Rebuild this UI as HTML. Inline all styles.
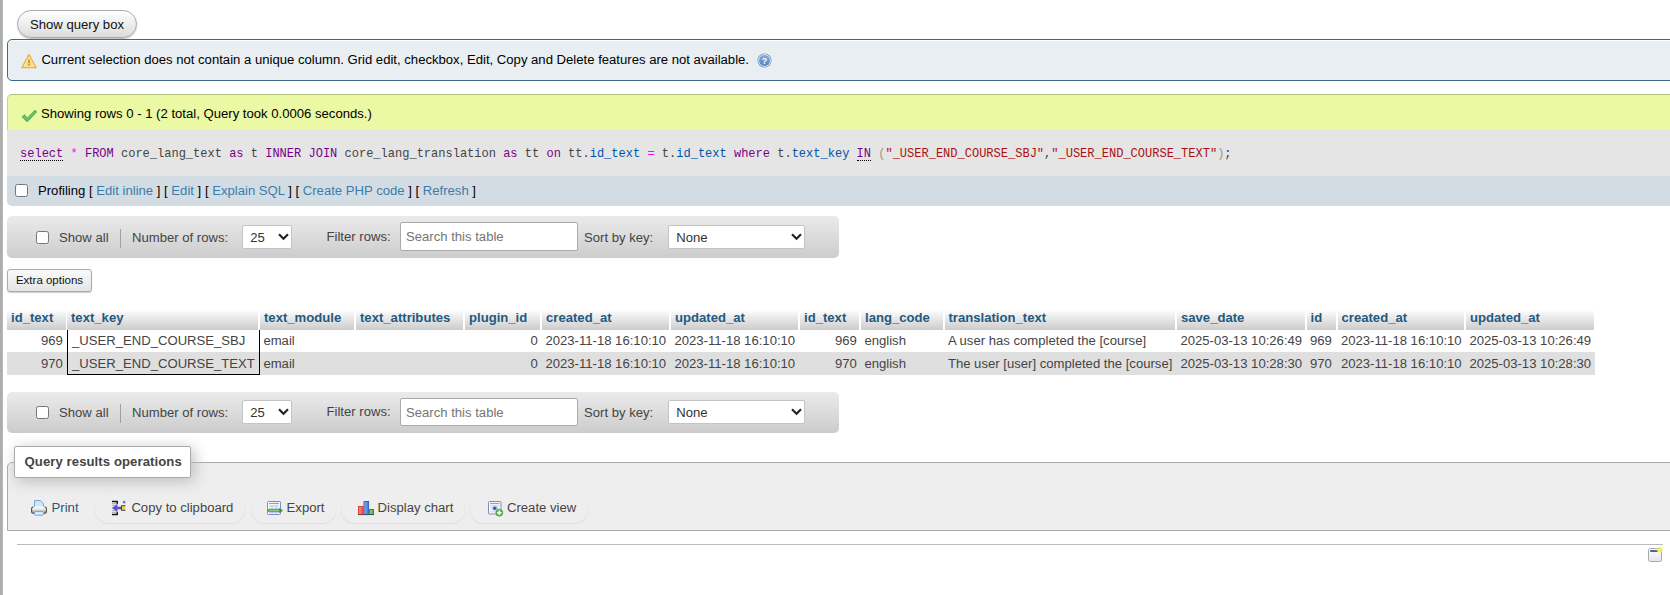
<!DOCTYPE html>
<html>
<head>
<meta charset="utf-8">
<title>phpMyAdmin</title>
<style>
html,body{margin:0;padding:0;}
body{width:1670px;height:595px;overflow:hidden;background:#fff;position:relative;
 font-family:"Liberation Sans",Arial,sans-serif;font-size:13.12px;color:#444;line-height:normal;}
*{box-sizing:border-box;}
.abs{position:absolute;}
#leftbar{left:0;top:0;width:3px;height:595px;background:#adadad;}
#leftbar2{left:2px;top:0;width:1px;height:595px;background:#b6b6b6;}
#showq{left:17px;top:10px;width:120px;height:28px;border:1px solid #aaa;border-radius:14px;
 background:linear-gradient(#ffffff,#dcdcdc);color:#111;font-size:13.12px;text-align:center;line-height:27px;
 box-shadow:0 1px 1px rgba(0,0,0,.25);}
#notice{left:7px;top:39px;width:1700px;height:42px;border:1px solid #3a6c7e;border-radius:5px;background:#e8eef1;
 box-shadow:inset 0 1px 1px #fff;color:#000;font-size:13.12px;}
#notice .t{left:33.4px;top:12px;white-space:nowrap;}
#success{left:7px;top:94px;width:1700px;height:36px;background:#ebf8a4;border-top:1px solid #adc27c;border-left:1px solid #c4d88a;
 border-radius:5px 5px 0 0;color:#000;}
#success .t{left:33px;top:11.4px;white-space:nowrap;}
#code{left:7px;top:130px;width:1700px;height:46px;background:#e5e5e5;}
#code .t{left:13px;top:17px;white-space:pre;font-family:"Liberation Mono",monospace;font-size:12.034px;color:#444;}
.kw{color:#708;} .op{color:#f0f;} .pr{color:#05a;} .st{color:#a11;} .br{color:#997;}
.dot{position:relative;}
.dot::after{content:"";position:absolute;left:0;right:0;top:13px;border-bottom:1px dotted #000;}
#tools{left:7px;top:176px;width:1700px;height:30px;background:#d3dce3;border-radius:0 0 5px 5px;color:#000;}
#tools .t{left:31px;top:7px;white-space:nowrap;font-size:13.12px;}
a,.a{color:#235a81;text-decoration:none;}
#tools .a{color:#3b7cab;}
.cb{position:absolute;width:13px;height:13px;border:1px solid #767676;border-radius:2.5px;background:#fff;}
.nav{left:7px;width:832px;height:41px;border-radius:5px;background:linear-gradient(#ebebeb,#cccccc);color:#444;font-size:13.12px;}
.nav span{position:absolute;white-space:nowrap;top:13px;}
.nav.n1 > *{margin-top:1px;}
.nav.n1 > .inp{margin-top:0;height:29px;}
.nav .sep{position:absolute;left:113px;top:12px;width:1px;height:19px;background:#a0a0a0;}
.sel{position:absolute;height:24px;border:1px solid #c4c4c4;border-radius:2px;background:#fff;color:#333;font-size:13.12px;}
.sel b{position:absolute;font-weight:normal;left:7.3px;top:3.5px;}
.sel svg{position:absolute;right:2.5px;top:7px;}
.inp{position:absolute;left:393px;top:6px;width:178px;height:28px;border:1px solid #aaa;border-radius:2px;background:#fff;color:#757575;font-size:13.12px;}
.inp b{position:absolute;font-weight:normal;left:5px;top:6px;}
#extra{left:7px;top:269px;width:85px;height:23px;border:1px solid #aaa;border-radius:3px;background:linear-gradient(#fafafa,#e4e4e4);
 color:#111;font-size:11.5px;text-align:center;line-height:21px;box-shadow:0 1px 1px rgba(0,0,0,.2);}
table#res{position:absolute;left:7px;top:309px;border-collapse:separate;border-spacing:0;table-layout:fixed;font-size:13.12px;color:#444;}
#res th{height:21px;line-height:15px;padding:0 0 4px 4px;text-align:left;font-weight:bold;color:#235a81;background:linear-gradient(#ffffff,#cccccc);
 border-right:2px solid #fff;white-space:nowrap;overflow:hidden;font-size:13.12px;}
#res td{height:22px;line-height:15px;padding:0 0 1px 3.4px;white-space:nowrap;overflow:hidden;border-right:2px solid transparent;}
#res th:last-child{border-right:1px solid #fff;}
#res th:first-child{border-right:1px solid #fff;}
#res td.r{text-align:right;padding:0 2.2px 1px 0;}
#res tr.e td{height:23px;padding-bottom:0;}
#res tr.e td{background:#dfdfdf;}
#res tr.o td{background:#fff;}
#res td.m{border-left:1px solid #000;border-right:1px solid #000;padding-left:4px;}
#res tr.e td.m{border-bottom:1px solid #000;}
#fs{left:7px;top:462px;width:1700px;height:69px;border:1px solid #aaa;border-radius:5px 0 0 0;background:#eee;}
#legend{left:14px;top:446px;width:177px;height:32px;border:1px solid #aaa;border-radius:2px;background:#fff;
 box-shadow:3px 3px 15px #bbb;font-weight:bold;color:#444;font-size:13.12px;line-height:30px;padding-left:9.5px;letter-spacing:.09px;}
.op1{position:absolute;top:495px;height:28px;border-radius:14px;white-space:nowrap;font-size:13.12px;line-height:25px;color:#444;
 box-shadow:0 1px 2px rgba(0,0,0,.07), 0 0 1px rgba(0,0,0,.03);}
.op1 svg{position:absolute;top:6px;}
.op1 span{position:absolute;top:0;}
#hr{left:17px;top:544px;width:1646px;height:1px;background:#bbb;}
</style>
</head>
<body>
<div id="leftbar" class="abs"></div><div id="leftbar2" class="abs"></div>

<div id="showq" class="abs">Show query box</div>

<div id="notice" class="abs">
 <svg class="abs" style="left:13px;top:13px" width="16" height="16" viewBox="0 0 16 16"><path d="M8 1.5 L15 14.5 L1 14.5 Z" fill="#f9dc7c" stroke="#e6b040" stroke-width="1.3" stroke-linejoin="round"/><path d="M8 4.2 L13 13.4 L3 13.4 Z" fill="none" stroke="#fdf0b8" stroke-width=".8"/><rect x="7.2" y="6.4" width="1.7" height="4" fill="#c98d2a"/><rect x="7.2" y="11.1" width="1.7" height="1.6" fill="#c98d2a"/></svg>
 <div class="abs t">Current selection does not contain a unique column. Grid edit, checkbox, Edit, Copy and Delete features are not available.</div>
 <svg class="abs" style="left:749.4px;top:13px" width="15" height="15" viewBox="0 0 15 15"><defs><linearGradient id="gh" x1="0" y1="0" x2="0" y2="1"><stop offset="0" stop-color="#86acdb"/><stop offset="1" stop-color="#5482bd"/></linearGradient></defs><circle cx="7.5" cy="7.5" r="7" fill="#6593cb"/><circle cx="7.5" cy="7.5" r="5.9" fill="url(#gh)" stroke="#e6eef9" stroke-width=".9"/><text x="7.5" y="10.7" font-family="Liberation Sans, sans-serif" font-size="9" font-weight="bold" fill="#fff" text-anchor="middle">?</text></svg>
</div>

<div id="success" class="abs">
 <svg class="abs" style="left:13px;top:14px" width="16" height="16" viewBox="0 0 16 16"><path d="M1.2 7.8 L6.1 12.9 L15.6 3 L14 1.2 L6.1 9.3 L3.6 5.7 Z" fill="#6cc46a" stroke="#4da24c" stroke-width=".9" stroke-linejoin="round"/></svg>
 <div class="abs t">Showing rows 0 - 1 (2 total, Query took 0.0006 seconds.)</div>
</div>

<div id="code" class="abs"><div class="abs t"><span class="kw dot">select</span> <span class="op">*</span> <span class="kw">FROM</span> core_lang_text <span class="kw">as</span> t <span class="kw">INNER JOIN</span> core_lang_translation <span class="kw">as</span> tt <span class="kw">on</span> tt.<span class="pr">id_text</span> <span class="op">=</span> t.<span class="pr">id_text</span> <span class="kw">where</span> t.<span class="pr">text_key</span> <span class="kw dot">IN</span> <span class="br">(</span><span class="st">"_USER_END_COURSE_SBJ"</span>,<span class="st">"_USER_END_COURSE_TEXT"</span><span class="br">)</span>;</div></div>

<div id="tools" class="abs">
 <div class="cb" style="left:8px;top:8px"></div>
 <div class="abs t">Profiling [ <span class="a">Edit inline</span> ] [ <span class="a">Edit</span> ] [ <span class="a">Explain SQL</span> ] [ <span class="a">Create PHP code</span> ] [ <span class="a">Refresh</span> ]</div>
</div>

<div class="abs nav n1" style="top:216px;height:42px">
 <div class="cb" style="left:29px;top:14px"></div>
 <span style="left:52px">Show all</span><div class="sep"></div>
 <span style="left:125px">Number of rows:</span>
 <div class="sel" style="left:235px;top:8px;width:50px"><b>25</b><svg width="11" height="8" viewBox="0 0 11 8"><path d="M1 1.2 L5.5 5.8 L10 1.2" fill="none" stroke="#222" stroke-width="2.1"/></svg></div>
 <span style="left:319.5px;top:12px">Filter rows:</span>
 <div class="inp"><b>Search this table</b></div>
 <span style="left:577px">Sort by key:</span>
 <div class="sel" style="left:661px;top:8px;width:137px"><b>None</b><svg width="11" height="8" viewBox="0 0 11 8"><path d="M1 1.2 L5.5 5.8 L10 1.2" fill="none" stroke="#222" stroke-width="2.1"/></svg></div>
</div>

<div id="extra" class="abs">Extra options</div>

<table id="res">
<colgroup><col style="width:60px"><col style="width:193px"><col style="width:96px"><col style="width:109px"><col style="width:77px"><col style="width:129px"><col style="width:129px"><col style="width:61px"><col style="width:83.5px"><col style="width:232.5px"><col style="width:129.5px"><col style="width:31px"><col style="width:128.5px"><col style="width:129px"></colgroup>
<tr><th>id_text</th><th>text_key</th><th>text_module</th><th>text_attributes</th><th>plugin_id</th><th>created_at</th><th>updated_at</th><th>id_text</th><th>lang_code</th><th>translation_text</th><th>save_date</th><th>id</th><th>created_at</th><th>updated_at</th></tr>
<tr class="o"><td class="r">969</td><td class="m">_USER_END_COURSE_SBJ</td><td>email</td><td></td><td class="r">0</td><td>2023-11-18 16:10:10</td><td>2023-11-18 16:10:10</td><td class="r">969</td><td>english</td><td>A user has completed the [course]</td><td>2025-03-13 10:26:49</td><td>969</td><td>2023-11-18 16:10:10</td><td>2025-03-13 10:26:49</td></tr>
<tr class="e"><td class="r">970</td><td class="m">_USER_END_COURSE_TEXT</td><td>email</td><td></td><td class="r">0</td><td>2023-11-18 16:10:10</td><td>2023-11-18 16:10:10</td><td class="r">970</td><td>english</td><td>The user [user] completed the [course]</td><td>2025-03-13 10:28:30</td><td>970</td><td>2023-11-18 16:10:10</td><td>2025-03-13 10:28:30</td></tr>
</table>

<div class="abs nav" style="top:392px">
 <div class="cb" style="left:29px;top:14px"></div>
 <span style="left:52px">Show all</span><div class="sep"></div>
 <span style="left:125px">Number of rows:</span>
 <div class="sel" style="left:235px;top:8px;width:50px"><b>25</b><svg width="11" height="8" viewBox="0 0 11 8"><path d="M1 1.2 L5.5 5.8 L10 1.2" fill="none" stroke="#222" stroke-width="2.1"/></svg></div>
 <span style="left:319.5px;top:12px">Filter rows:</span>
 <div class="inp"><b>Search this table</b></div>
 <span style="left:577px">Sort by key:</span>
 <div class="sel" style="left:661px;top:8px;width:137px"><b>None</b><svg width="11" height="8" viewBox="0 0 11 8"><path d="M1 1.2 L5.5 5.8 L10 1.2" fill="none" stroke="#222" stroke-width="2.1"/></svg></div>
</div>

<div id="fs" class="abs"></div>
<div id="legend" class="abs">Query results operations</div>

<svg class="abs" style="left:31px;top:500px" width="16" height="16" viewBox="0 0 16 16"><defs><linearGradient id="gp" x1="0" y1="0" x2="0" y2="1"><stop offset="0" stop-color="#ffffff"/><stop offset=".45" stop-color="#e6e6e6"/><stop offset="1" stop-color="#8f8f8f"/></linearGradient></defs><path d="M3.5 7.5 V0.5 H9.3 L12.5 3.7 V7.5 Z" fill="#cfe6f8" stroke="#74a4d8"/><path d="M1 13 V8.3 Q1 6.5 3 6.5 H13 Q15 6.5 15 8.3 V13 Z" fill="url(#gp)"/><path d="M2.6 6.7 Q0.6 6.9 0.6 8.8 V12 Q0.6 13.2 2 13.2 H14 Q15.4 13.2 15.4 12 V8.8 Q15.4 6.9 13.4 6.7" fill="none" stroke="#4a4a4a" stroke-width="1.1"/><rect x="3.5" y="11.6" width="9" height="3.6" rx="1.2" fill="#dcecfb" stroke="#74a4d8"/></svg>
<div class="op1" style="left:23px;width:62px;box-shadow:none"><span class="a" style="left:28.6px">Print</span></div>
<div class="op1" style="left:95px;width:150px"></div><svg class="abs" style="left:111px;top:500px" width="16" height="16" viewBox="0 0 16 16"><path d="M1 1.6 H6.2 V4 M1 14.4 H6.2 V12" fill="none" stroke="#1a1a1a" stroke-width="1.5"/><path d="M1 3.6 H5.4 M1 5.3 H4 M1 10.7 H4 M1 12.4 H5.4" stroke="#b5b5b5" stroke-width="1"/><path d="M0.9 8 L6.4 3.8 V6.8 H10.4 V9.2 H6.4 V12.2 Z" fill="#5e52d0"/><rect x="10.8" y="6.1" width="3.5" height="3.7" fill="#f3d22f"/><path d="M14.4 5.7 H10.4 V10.3 H14.4" fill="none" stroke="#2a2a2a" stroke-width=".9"/><path d="M13.1 0.4 L13.8 1.6 L15 2.1 L13.8 2.7 L13.1 3.9 L12.4 2.7 L11.2 2.1 L12.4 1.6 Z" fill="#4a5bd6"/></svg><div class="op1" style="left:95px;width:150px;box-shadow:none"><span style="left:36.4px">Copy to clipboard</span></div>
<div class="op1" style="left:251px;width:85px"></div><svg class="abs" style="left:267px;top:500px" width="16" height="16" viewBox="0 0 16 16"><rect x="0.5" y="1.5" width="13" height="13" rx="0.8" fill="#fafcff" stroke="#7b8fc4"/><path d="M2 3.5 H12" stroke="#7dbb6a" stroke-width="1.2"/><path d="M2 6 H12 M2 8.3 H12 M2 12.6 H12 M5 5 V9 M9 5 V9 M5 12 V14 M9 12 V14" stroke="#b9c5e2" stroke-width="1"/><path d="M1 9.3 H12.2 V7.8 L16 10.5 L12.2 13.2 V11.7 H1 Z" fill="#3f8f2f"/><path d="M2 10.5 H12.5" stroke="#86cf6e" stroke-width=".9"/></svg><div class="op1" style="left:251px;width:85px;box-shadow:none"><span style="left:35.6px">Export</span></div>
<div class="op1" style="left:341px;width:124px"></div><svg class="abs" style="left:358px;top:500px" width="16" height="16" viewBox="0 0 16 16"><defs><linearGradient id="gr" x1="0" y1="0" x2="1" y2="0"><stop offset="0" stop-color="#ff8f8a"/><stop offset="1" stop-color="#e8504c"/></linearGradient><linearGradient id="gb" x1="0" y1="0" x2="1" y2="0"><stop offset="0" stop-color="#8fb6ee"/><stop offset="1" stop-color="#3f73c8"/></linearGradient><linearGradient id="gg" x1="0" y1="0" x2="1" y2="0"><stop offset="0" stop-color="#9fd890"/><stop offset="1" stop-color="#4fa045"/></linearGradient></defs><rect x="0.5" y="6.5" width="4.6" height="8" fill="url(#gr)" stroke="#d8403c"/><rect x="6" y="1.5" width="4.6" height="13" fill="url(#gb)" stroke="#3767b8"/><rect x="11.4" y="9.5" width="4.1" height="5" fill="url(#gg)" stroke="#3f8a38"/><path d="M0 14.6 H16" stroke="#2a4a2a" stroke-width=".9" opacity=".7"/></svg><div class="op1" style="left:341px;width:124px;box-shadow:none"><span style="left:36.6px">Display chart</span></div>
<div class="op1" style="left:470px;width:118px"></div><svg class="abs" style="left:487px;top:500px" width="17" height="17" viewBox="0 0 17 17"><rect x="1.5" y="1.5" width="12.5" height="12.5" rx="0.8" fill="#f4f7fd" stroke="#7b8fc4"/><path d="M3 3.5 H12.5" stroke="#86c076" stroke-width="1.1"/><path d="M3 5.6 H12.5 M3 11.8 H9" stroke="#f0c9a8" stroke-width=".9"/><ellipse cx="7.8" cy="8.3" rx="3.6" ry="2.5" fill="#c9d3ea"/><circle cx="7.8" cy="8.2" r="1.7" fill="#3c57a8"/><circle cx="12.3" cy="12.7" r="3.5" fill="#60b44d" stroke="#43903a" stroke-width=".6"/><path d="M12.3 10.5 V14.9 M10.1 12.7 H14.5" stroke="#fff" stroke-width="1.5"/></svg><div class="op1" style="left:470px;width:118px;box-shadow:none"><span style="left:37px">Create view</span></div>

<div id="hr" class="abs"></div>
<svg class="abs" style="left:1646px;top:546px" width="20" height="18" viewBox="0 0 20 18"><defs><linearGradient id="gw" x1="0" y1="0" x2="0" y2="1"><stop offset="0" stop-color="#ffffff"/><stop offset="1" stop-color="#e4e4ee"/></linearGradient><radialGradient id="gy"><stop offset="0" stop-color="#fff04a"/><stop offset=".6" stop-color="#fbe94a" stop-opacity=".85"/><stop offset="1" stop-color="#fff27a" stop-opacity="0"/></radialGradient></defs><rect x="2.5" y="2.5" width="13" height="13" rx="2" fill="url(#gw)" stroke="#a9a9a9"/><rect x="4.2" y="4.2" width="7.6" height="1.6" fill="#1f3c8c"/><circle cx="13.7" cy="3.8" r="3.6" fill="url(#gy)"/></svg>
</body>
</html>
